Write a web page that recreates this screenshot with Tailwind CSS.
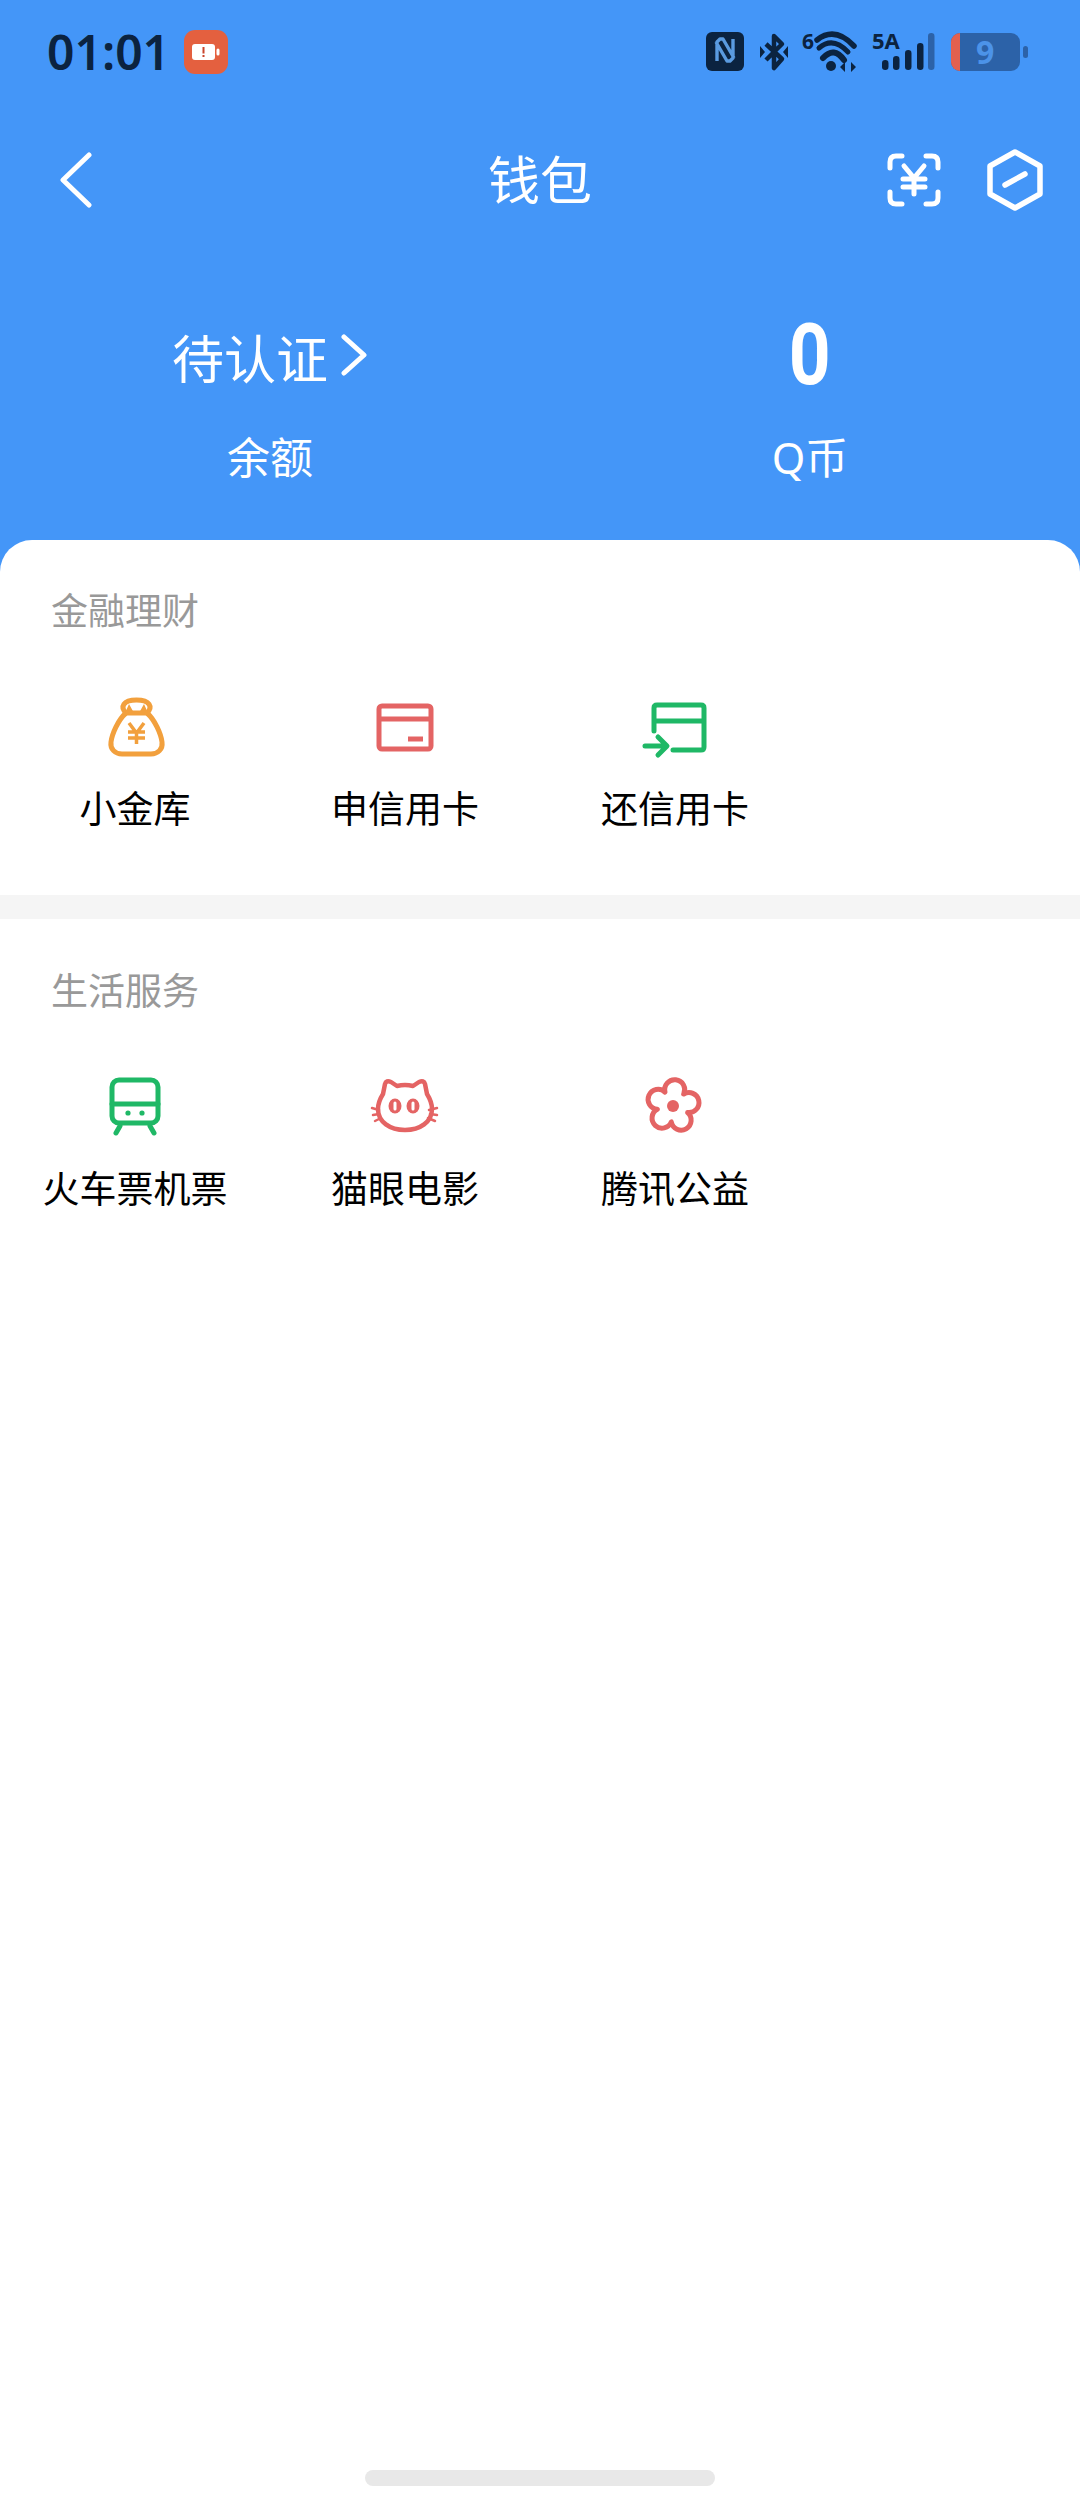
<!DOCTYPE html>
<html lang="zh-CN">
<head>
  <meta charset="UTF-8" />
  <meta name="viewport" content="width=device-width, initial-scale=1" />
  <title>钱包</title>
  <script src="https://cdn.jsdelivr.net/npm/@tailwindcss/browser@4"></script>
</head>
<body class="bg-white font-['Noto_Sans','Noto_Sans_CJK_SC',sans-serif]">
  <div class="flex h-[2504px] w-[1080px] flex-col overflow-hidden">
    <!-- blue header -->
    <header class="h-[572px] shrink-0 bg-[#4496f8] text-white">
      <div class="flex h-[104px] items-center justify-between pl-[47px] pr-[50px] text-[#0b2340]">
        <div class="flex items-center gap-[14px]">
          <span class="text-[48px] leading-none font-semibold">01:01</span>
          <div class="flex h-[44px] w-[44px] items-center justify-center rounded-[11px] bg-[#e4603f]">
            <svg width="28" height="16" viewBox="0 0 28 16">
              <rect x="0" y="0" width="23" height="16" rx="3" fill="#fff" />
              <rect x="24.5" y="4.5" width="3" height="7" rx="1.5" fill="#fff" />
              <rect x="10.5" y="3" width="2" height="6.5" fill="#c9452c" />
              <rect x="10.5" y="11" width="2" height="2" fill="#c9452c" />
            </svg>
          </div>
        </div>
        <svg width="324" height="44" viewBox="0 0 324 44" class="overflow-visible font-['Noto_Sans',sans-serif]">
          <rect x="0" y="2" width="38" height="39" rx="6" fill="#0b2340" />
          <path d="M11 31V12L14 9H17L28 28M27 9V28L24 31H21L10 12" fill="none" stroke="#5a9be0" stroke-width="3.4" stroke-linejoin="round" />
          <path d="M60 14L76 29L68 38V6L76 14L60 30" fill="none" stroke="#0b2340" stroke-width="4.5" stroke-linejoin="round" />
          <path d="M54 16L59 22L54 28ZM82 16V28L77 22Z" fill="#0b2340" />
          <text x="96" y="19" font-size="21" font-weight="700" fill="#0b2340">6</text>
          <path d="M111 10Q129 -4 148 16" fill="none" stroke="#0b2340" stroke-width="5.5" stroke-linecap="round" />
          <path d="M113 18Q127 6 142 22" fill="none" stroke="#0b2340" stroke-width="5" stroke-linecap="round" />
          <path d="M117 28Q128 16 138 30" fill="none" stroke="#0b2340" stroke-width="6" stroke-linecap="round" />
          <circle cx="125" cy="36" r="5" fill="#0b2340" />
          <path d="M134 37L139 32V42ZM150 37L145 32V42Z" fill="#0b2340" />
          <text x="166" y="19" font-size="22" font-weight="700" fill="#0b2340">5A</text>
          <rect x="176" y="30" width="6.5" height="10" rx="3.2" fill="#0b2340" />
          <rect x="187" y="26" width="6.5" height="14" rx="3.2" fill="#0b2340" />
          <rect x="199" y="20" width="6.5" height="20" rx="3.2" fill="#0b2340" />
          <rect x="211" y="13" width="6.5" height="27" rx="3.2" fill="#0b2340" />
          <rect x="222" y="3" width="6.5" height="37" rx="3.2" fill="#2c62a8" />
          <rect x="245" y="3" width="69" height="38" rx="9" fill="#2c62a8" />
          <path d="M254 3V41A9 9 0 0 1 245 32V12A9 9 0 0 1 254 3Z" fill="#e2604f" />
          <rect x="317" y="16" width="5" height="12" rx="2.5" fill="#2c62a8" />
          <text x="270" y="34" font-size="32" font-weight="700" fill="#4c93e8">9</text>
        </svg>
      </div>

      <nav class="mt-[26px] grid h-[100px] grid-cols-[1fr_auto_1fr] items-center">
        <div class="pl-[60px]">
          <svg width="34" height="56" viewBox="0 0 34 56">
            <path d="M29 3L3 28L29 53" fill="none" stroke="#fff" stroke-width="5" stroke-linecap="round" stroke-linejoin="round" />
          </svg>
        </div>
        <h1 class="text-[52px] leading-none">钱包</h1>
        <div class="flex items-center justify-end gap-[46px] pr-[37px]">
          <svg width="54" height="54" viewBox="0 0 54 54" fill="none" stroke="#fff" stroke-width="5" stroke-linecap="round" stroke-linejoin="round">
            <path d="M3 15V9Q3 3 9 3H15M39 3H45Q51 3 51 9V15M51 39V45Q51 51 45 51H39M15 51H9Q3 51 3 45V39" />
            <path d="M17 13L27 25L37 13M27 25V41M16 26H38M16 34H38" />
          </svg>
          <svg width="56" height="62" viewBox="0 0 56 62" fill="none" stroke="#fff" stroke-linecap="round" stroke-linejoin="round">
            <path d="M28 3L53 17V45L28 59L3 45V17Z" stroke-width="5.5" />
            <path d="M18 36L38 25" stroke-width="5.5" />
          </svg>
        </div>
      </nav>

      <div class="mt-[70px] grid grid-cols-2 text-center">
        <div class="flex h-[110px] items-center justify-center pt-[8px] text-[52px] leading-none">
          <span>待认证</span>
          <svg width="28" height="42" viewBox="0 0 28 42" class="ml-[12px] -translate-y-[4px]">
            <path d="M4 3L24 21L4 39" fill="none" stroke="#fff" stroke-width="5" stroke-linecap="round" stroke-linejoin="round" />
          </svg>
        </div>
        <div class="flex h-[110px] items-center justify-center font-['Roboto',sans-serif] text-[86px] leading-none font-bold">
          <span class="inline-block scale-x-[0.85]">0</span>
        </div>
        <div class="flex h-[94px] items-center justify-center text-[43px] leading-none">余额</div>
        <div class="flex h-[94px] items-center justify-center text-[43px] leading-none">Q币</div>
      </div>
    </header>

    <main class="-mt-[32px] flex flex-1 flex-col rounded-t-[32px] bg-white">
      <section class="h-[379px] shrink-0 border-b-[24px] border-[#f5f5f5]">
        <h2 class="pt-[44px] pl-[51px] text-[37px] leading-[54px] text-[#999]">金融理财</h2>
        <div class="mt-[54px] grid grid-cols-[repeat(4,270px)]">
          <a class="flex flex-col items-center">
            <svg width="70" height="70" viewBox="0 0 70 70" fill="none" stroke="#f2a03d" stroke-width="5" stroke-linecap="round" stroke-linejoin="round">
              <path d="M26 21C18 28 12 42 11 50C10 57 15 62 22 62H51C58 62 63 57 62 50C61 42 55 28 47 21Z" />
              <path d="M26 21C20 15 23 8 36.5 8C50 8 53 15 47 21" />
              <path d="M25 21L29 12L34 21ZM48 21L44 12L39 21Z" fill="#f2a03d" stroke="none" />
              <path d="M29 31L36.5 41L44 31M36.5 41V52M28 40H45M28 46H45" stroke-width="3.5" stroke-linecap="butt" stroke-linejoin="miter" />
            </svg>
            <span class="mt-[20px] text-[37px] leading-[54px] text-black">小金库</span>
          </a>
          <a class="flex flex-col items-center">
            <svg width="70" height="70" viewBox="0 0 70 70" fill="none" stroke="#e46464" stroke-width="5" stroke-linejoin="round">
              <rect x="9" y="14" width="52" height="43" rx="3" />
              <path d="M9 27H61" />
              <path d="M38 47H53" />
            </svg>
            <span class="mt-[20px] text-[37px] leading-[54px] text-black">申信用卡</span>
          </a>
          <a class="flex flex-col items-center">
            <svg width="70" height="70" viewBox="0 0 70 70" fill="none" stroke="#1fb866" stroke-width="5" stroke-linecap="round" stroke-linejoin="round">
              <path d="M14 39V16Q14 13 17 13H61Q64 13 64 16V55Q64 58 61 58H33" />
              <path d="M14 29H64" stroke-linecap="butt" />
              <path d="M5 54H26M18 45L27 54L18 63" />
            </svg>
            <span class="mt-[20px] text-[37px] leading-[54px] text-black">还信用卡</span>
          </a>
        </div>
      </section>

      <section class="shrink-0">
        <h2 class="pt-[45px] pl-[51px] text-[37px] leading-[54px] text-[#999]">生活服务</h2>
        <div class="mt-[54px] grid grid-cols-[repeat(4,270px)]">
          <a class="flex flex-col items-center">
            <svg width="70" height="70" viewBox="0 0 70 70" fill="none" stroke="#1fb866" stroke-width="5" stroke-linecap="round" stroke-linejoin="round">
              <rect x="12" y="8" width="46" height="43" rx="7" />
              <path d="M12 32H58" />
              <path d="M20 54L16 61M50 54L54 61" />
              <circle cx="28" cy="41" r="2.6" fill="#1fb866" stroke="none" />
              <circle cx="42" cy="41" r="2.6" fill="#1fb866" stroke="none" />
            </svg>
            <span class="mt-[20px] text-[37px] leading-[54px] text-black">火车票机票</span>
          </a>
          <a class="flex flex-col items-center">
            <svg width="70" height="70" viewBox="0 0 70 70" fill="none" stroke="#e46464" stroke-width="4.5" stroke-linecap="round" stroke-linejoin="round">
              <path d="M15 12Q16 8 21 10L27 14Q35 12 43 14L49 10Q54 8 55 12L57 22Q62 30 62 37C62 50 50 58 35 58C20 58 8 50 8 37Q8 30 13 22Z" />
              <ellipse cx="25" cy="34" rx="6.5" ry="7.5" fill="#e46464" stroke="none" />
              <ellipse cx="43" cy="34" rx="6.5" ry="7.5" fill="#e46464" stroke="none" />
              <path d="M25 31V37M43 31V37" stroke="#fff" stroke-width="3" />
              <path d="M9 38L2 36M9 42L3 43M11 46L5 49M59 38L67 36M60 42L67 43M58 46L65 49" stroke-width="2.5" />
            </svg>
            <span class="mt-[20px] text-[37px] leading-[54px] text-black">猫眼电影</span>
          </a>
          <a class="flex flex-col items-center">
            <svg width="70" height="70" viewBox="0 0 70 70" fill="none" stroke="#e46464" stroke-width="5" stroke-linejoin="round">
              <path d="M25 20.1A10 10 0 1 1 43.7 22.1A10 10 0 1 1 47.6 40.5A10 10 0 1 1 31.3 49.9A10 10 0 1 1 17.3 37.3A10 10 0 1 1 25 20.1Z" />
              <circle cx="33" cy="34" r="6" fill="#e46464" stroke="none" />
            </svg>
            <span class="mt-[20px] text-[37px] leading-[54px] text-black">腾讯公益</span>
          </a>
        </div>
      </section>

      <div class="mt-auto mb-[18px] h-[16px] w-[350px] self-center rounded-full bg-[#e8e8e8]"></div>
    </main>
  </div>
</body>
</html>
